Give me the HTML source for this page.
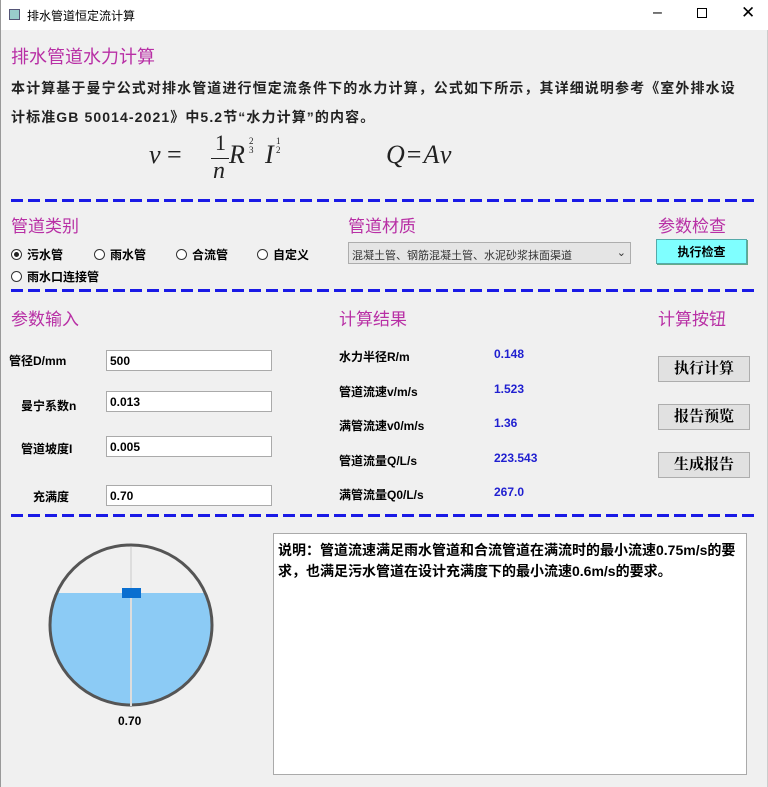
<!DOCTYPE html>
<html><head><meta charset="utf-8"><style>
*{margin:0;padding:0;box-sizing:border-box}
body{width:768px;height:787px;background:#f0f0f0;font-family:"Liberation Sans","Noto Sans CJK SC",sans-serif;position:relative;overflow:hidden;color:#000;border-left:1px solid #999;border-right:1px solid #ccc}
.a{position:absolute;white-space:nowrap}
.tb{left:0;top:0;width:768px;height:30px;background:#fff}
.h{color:#b82fa5;font-size:17px}
.p{font-size:14px;font-weight:bold;color:#222;letter-spacing:1.1px}
.dash{position:absolute;left:10px;width:744px;height:3px;background:repeating-linear-gradient(90deg,#1a1ae6 0 12px,transparent 12px 17px)}
.r{font-size:12px;font-weight:bold}
.r i{display:inline-block;width:11px;height:11px;border:1px solid #333;border-radius:50%;vertical-align:-1px;margin-right:5px;background:#fff;position:relative}
.r i.on::after{content:"";position:absolute;left:2px;top:2px;width:5px;height:5px;border-radius:50%;background:#222}
.in{position:absolute;left:105px;width:166px;height:21px;background:#fff;border:1px solid #aaa;font-size:12px;font-weight:bold;padding:3px 3px}
.lb{font-size:12px;font-weight:bold}
.v{font-size:12px;font-weight:bold;color:#1f1fd0}
.btn{position:absolute;left:657px;width:92px;height:26px;background:#e1e1e1;border:1px solid #adadad;font-size:15px;font-weight:bold;text-align:center;line-height:24px;font-family:"Liberation Serif","Noto Serif CJK SC",serif}
.m{font-family:'Liberation Serif',serif;color:#222}
</style></head><body>
<div class="a tb"></div>
<div class="a" style="left:8px;top:9px;width:11px;height:11px;border:1px solid #557;background:#9cc"></div>
<div class="a" style="left:26px;top:7px;font-size:12px">排水管道恒定流计算</div>
<div class="a" style="left:652px;top:4px;font-size:16px">–</div>
<div class="a" style="left:696px;top:8px;width:10px;height:10px;border:1px solid #000"></div>
<div class="a" style="left:740px;top:3px;font-size:17px">✕</div>

<div class="a h" style="left:10px;top:43px;font-size:18px">排水管道水力计算</div>
<div class="a p" style="left:10px;top:78px">本计算基于曼宁公式对排水管道进行恒定流条件下的水力计算，公式如下所示，其详细说明参考《室外排水设</div>
<div class="a p" style="left:10px;top:107px">计标准GB 50014-2021》中5.2节“水力计算”的内容。</div>
<div class="a m" style="left:148px;top:140px;font-size:26px;font-style:italic">v <span style="font-style:normal">=</span></div>
<div class="a m" style="left:214px;top:130px;font-size:22px">1</div>
<div class="a m" style="left:210px;top:158px;width:18px;height:1px;background:#222"></div>
<div class="a m" style="left:212px;top:158px;font-size:24px;font-style:italic">n</div>
<div class="a m" style="left:228px;top:140px;font-size:26px;font-style:italic">R</div>
<div class="a m" style="left:248px;top:137px;font-size:9px;line-height:9px">2<br>3</div>
<div class="a m" style="left:264px;top:140px;font-size:26px;font-style:italic">I</div>
<div class="a m" style="left:275px;top:137px;font-size:9px;line-height:9px">1<br>2</div>
<div class="a m" style="left:385px;top:140px;font-size:26px;font-style:italic;letter-spacing:2px">Q<span style="font-style:normal">=</span>Av</div>

<div class="dash" style="top:199px"></div>
<div class="a h" style="left:10px;top:212px">管道类别</div>
<div class="a h" style="left:347px;top:212px">管道材质</div>
<div class="a h" style="left:657px;top:212px">参数检查</div>
<div class="a r" style="left:10px;top:246px"><i class="on"></i>污水管</div>
<div class="a r" style="left:93px;top:246px"><i></i>雨水管</div>
<div class="a r" style="left:175px;top:246px"><i></i>合流管</div>
<div class="a r" style="left:256px;top:246px"><i></i>自定义</div>
<div class="a r" style="left:10px;top:268px"><i></i>雨水口连接管</div>
<div class="a" style="left:347px;top:242px;width:283px;height:22px;background:#e5e5e5;border:1px solid #adadad;font-size:11px;padding:4px 3px;color:#333">混凝土管、钢筋混凝土管、水泥砂浆抹面渠道<span style="position:absolute;right:4px;top:3px">⌄</span></div>
<div class="a" style="left:655px;top:239px;width:91px;height:25px;background:#7fffff;border:1px solid #5aa;box-shadow:1px 1px 0 #6a8;font-size:12px;font-weight:bold;text-align:center;line-height:24px">执行检查</div>

<div class="dash" style="top:289px"></div>
<div class="a h" style="left:10px;top:305px">参数输入</div>
<div class="a h" style="left:338px;top:305px">计算结果</div>
<div class="a h" style="left:657px;top:305px">计算按钮</div>
<div class="a lb" style="left:8px;top:352px">管径D/mm</div>
<div class="a lb" style="left:20px;top:397px">曼宁系数n</div>
<div class="a lb" style="left:20px;top:440px">管道坡度I</div>
<div class="a lb" style="left:32px;top:488px">充满度</div>
<div class="in" style="top:350px">500</div>
<div class="in" style="top:391px">0.013</div>
<div class="in" style="top:436px">0.005</div>
<div class="in" style="top:485px">0.70</div>
<div class="a lb" style="left:338px;top:348px">水力半径R/m</div>
<div class="a lb" style="left:338px;top:383px">管道流速v/m/s</div>
<div class="a lb" style="left:338px;top:417px">满管流速v0/m/s</div>
<div class="a lb" style="left:338px;top:452px">管道流量Q/L/s</div>
<div class="a lb" style="left:338px;top:486px">满管流量Q0/L/s</div>
<div class="a v" style="left:493px;top:347px">0.148</div>
<div class="a v" style="left:493px;top:382px">1.523</div>
<div class="a v" style="left:493px;top:416px">1.36</div>
<div class="a v" style="left:493px;top:451px">223.543</div>
<div class="a v" style="left:493px;top:485px">267.0</div>
<div class="btn" style="top:356px">执行计算</div>
<div class="btn" style="top:404px">报告预览</div>
<div class="btn" style="top:452px">生成报告</div>

<div class="dash" style="top:514px"></div>
<svg class="a" style="left:0;top:530px" width="270" height="210">
<defs><clipPath id="c"><ellipse cx="130" cy="95" rx="80" ry="80"/></clipPath></defs>
<rect x="40" y="63" width="180" height="120" fill="#8ccbf5" clip-path="url(#c)"/>
<ellipse cx="130" cy="95" rx="81" ry="80" fill="none" stroke="#555" stroke-width="3"/>
<line x1="130" y1="17" x2="130" y2="176" stroke="#ddd" stroke-width="2"/>
<rect x="121" y="58" width="19" height="10" fill="#0a6fd0"/>
</svg>
<div class="a lb" style="left:117px;top:714px">0.70</div>
<div class="a" style="left:272px;top:533px;width:474px;height:242px;background:#fff;border:1px solid #aaa;font-size:14px;font-weight:bold;padding:6px 3px 6px 4px;white-space:normal;line-height:21px;word-break:break-all">说明：管道流速满足雨水管道和合流管道在满流时的最小流速0.75m/s的要求，也满足污水管道在设计充满度下的最小流速0.6m/s的要求。</div>
</body></html>
